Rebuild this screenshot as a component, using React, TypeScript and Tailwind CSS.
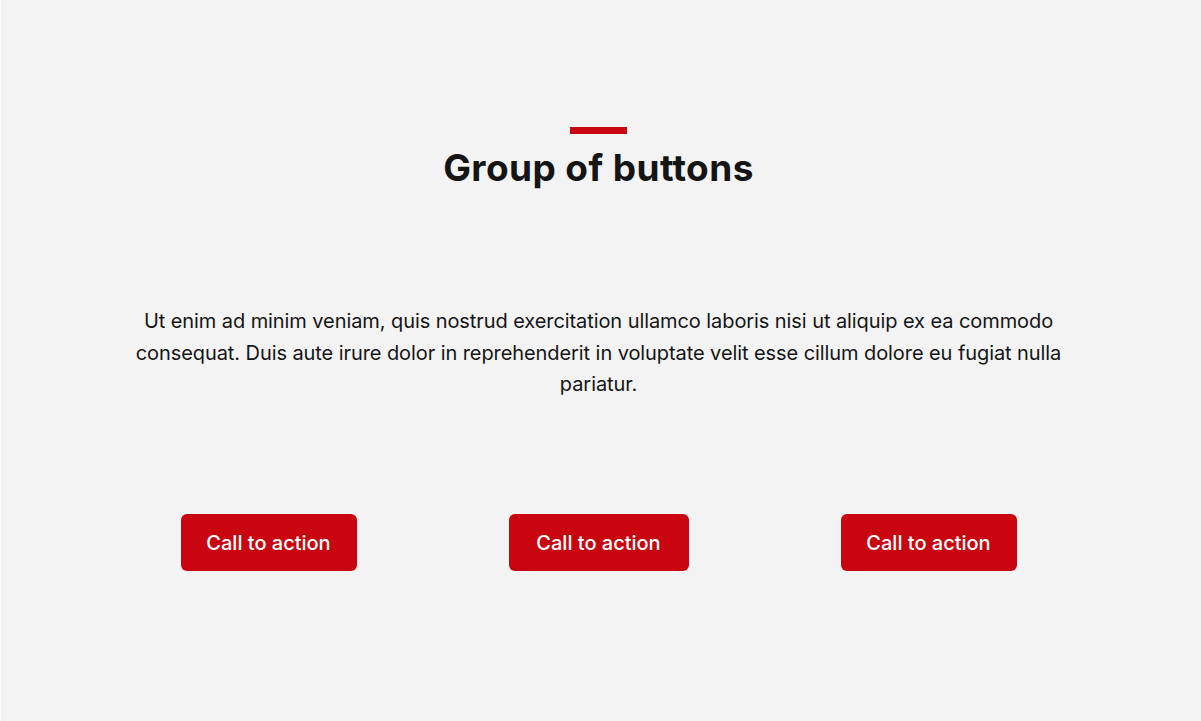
export default function App() {
  return (
    <div className="min-h-[721px] w-full bg-[#f3f3f3] border-l border-[#fbfbfb] pr-[5px] flex flex-col items-center" style={{ fontFamily: "Inter, 'Noto Sans', sans-serif" }}>
      <div className="mt-[127px] h-[7px] w-[57px] bg-[#c9060f]" />
      <h1 className="mt-[12px] text-[37px] leading-[44px] font-bold text-[#151515] tracking-[0.4px]">Group of buttons</h1>
      <p className="mt-[116px] w-[930px] text-center text-[20px] leading-[31.5px] text-[#151515] tracking-[-0.08px]">
        Ut enim ad minim veniam, quis nostrud exercitation ullamco laboris nisi ut aliquip ex ea commodo consequat. Duis aute irure dolor in reprehenderit in voluptate velit esse cillum dolore eu fugiat nulla pariatur.
      </p>
      <div className="mt-[113px] grid w-[990px] grid-cols-3">
        {[176, 180, 176].map((w, i) => (
          <div key={i} className="flex justify-center">
            <button className="h-[57px] pt-[2px] rounded-[6px] bg-[#c9060f] text-white text-[20px] font-medium" style={{ width: w }}>
              Call to action
            </button>
          </div>
        ))}
      </div>
    </div>
  );
}
